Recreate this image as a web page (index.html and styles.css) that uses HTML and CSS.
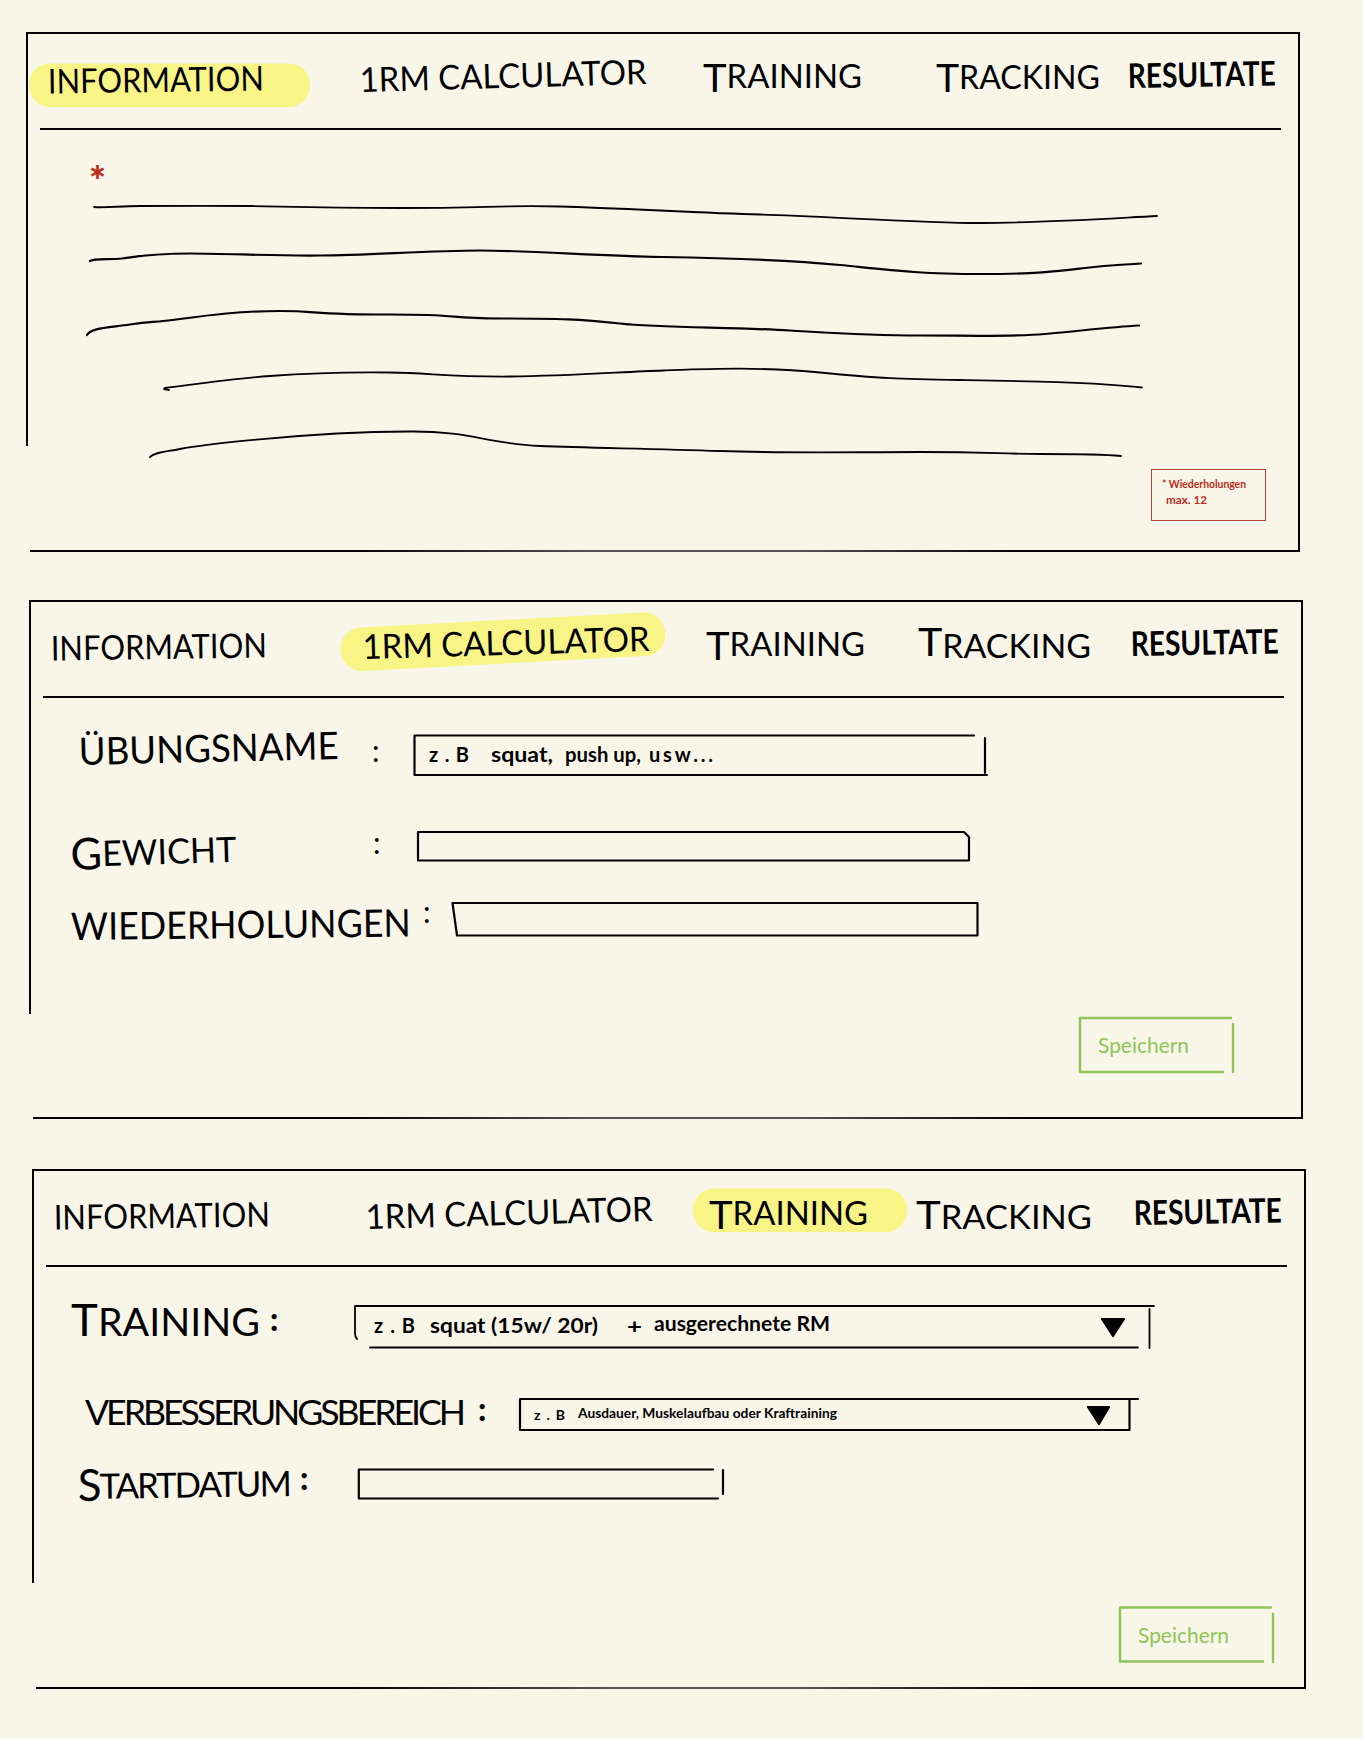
FILE: index.html
```html
<!DOCTYPE html>
<html lang="de">
<head>
<meta charset="utf-8">
<title>1RM Calculator – Wireframes</title>
<link rel="stylesheet" href="styles.css">
</head>
<body>
<main class="board">

  <section class="panel panel--info">
    <nav class="tabs">
      <svg class="ink" width="216" height="60" viewBox="48 52 216 60"><rect class="marker" x="29" y="63.5" width="281" height="43.5" rx="21"/><text class="tab" x="48" y="93.500" textLength="216" lengthAdjust="spacingAndGlyphs" transform="rotate(-.8 48 94)">INFORMATION</text></svg>
      <svg class="ink" width="287" height="60" viewBox="360 52 287 60"><text class="tab" x="360" y="92" textLength="287" lengthAdjust="spacingAndGlyphs" transform="rotate(-1.6 360 92)">1RM CALCULATOR</text></svg>
      <svg class="ink" width="159" height="60" viewBox="703 52 159 60"><text class="tab tab--small" x="703" y="92" textLength="159" lengthAdjust="spacingAndGlyphs"><tspan class="initial">T</tspan><tspan dy="-4">RAINING</tspan></text></svg>
      <svg class="ink" width="164" height="60" viewBox="936 52 164 60"><text class="tab tab--small" x="936" y="92" textLength="164" lengthAdjust="spacingAndGlyphs"><tspan class="initial">T</tspan><tspan dy="-3">RACKING</tspan></text></svg>
      <svg class="ink" width="148" height="60" viewBox="1128 52 148 60"><text class="tab tab--bold" x="1128" y="88" textLength="148" lengthAdjust="spacingAndGlyphs" transform="rotate(-1 1128 88)">RESULTATE</text></svg>
    </nav>
    <svg class="ink scribbles" width="1274" height="330" viewBox="26 130 1274 330">
      <text class="asterisk" x="89" y="196">*</text>
      <path class="thin" d="M94 207C105 208 120 206 140 206S220 205.7 250 206S310 208 400 208S500 205 560 206.5S700 213 760 214.5S920 223 980 223S1100 219 1157 216"/>
      <path d="M90 261C94 258 110 260 122 258.5S150 253.5 190 253.5S270 256 320 255.5S430 250.5 480 250.5S600 256 663 257S790 260 840 265S920 274 980 274S1060 271 1085 268S1120 265 1141 263.5"/>
      <path d="M87 335C91 328 105 328 130 324.5S150 323 180 319S240 311 280 311S310 314.5 390 314.5S440 318.5 500 318.5S580 319 620 323.5S730 327 790 330.5S870 335.5 920 335.5S1010 337 1045 334S1110 327 1139 325.5"/>
      <path class="thin" d="M169 390L164 389L165 388C190 385 230 379 270 376S350 372 390 372.5S450 377 510 376.5S620 372 663 370.5S760 366.5 820 372.5S900 379 960 380S1090 382 1142 387.5"/>
      <path class="thin" d="M150 457C155 452 165 452 180 449S300 432 410 431.5C470 431 490 444 540 446S650 448.5 720 451S850 452 920 452S1000 454 1040 454S1100 454 1121 456"/>
    </svg>
    <aside class="note">
      <svg class="ink" width="90" height="34" viewBox="1161 475 90 34"><text x="1162" y="488.500" textLength="84" lengthAdjust="spacingAndGlyphs">* Wiederholungen</text><text x="1166" y="505" textLength="41" lengthAdjust="spacingAndGlyphs">max. 12</text></svg>
    </aside>
  </section>

  <section class="panel panel--calc">
    <nav class="tabs">
      <svg class="ink" width="216" height="60" viewBox="48 52 216 60"><text class="tab" x="48" y="92.500" textLength="216" lengthAdjust="spacingAndGlyphs" transform="rotate(-.8 48 94)">INFORMATION</text></svg>
      <svg class="ink" width="287" height="60" viewBox="360 52 287 60"><rect class="marker" x="337.500" y="52" width="325" height="43.500" rx="21" transform="rotate(-3 500 74)"/><text class="tab" x="360" y="91" textLength="287" lengthAdjust="spacingAndGlyphs" transform="rotate(-1.6 360 92)">1RM CALCULATOR</text></svg>
      <svg class="ink" width="159" height="60" viewBox="703 52 159 60"><text class="tab tab--small" x="703" y="91.500" textLength="159" lengthAdjust="spacingAndGlyphs"><tspan class="initial">T</tspan><tspan dy="-4">RAINING</tspan></text></svg>
      <svg class="ink" width="173" height="60" viewBox="918 620 173 60"><text class="tab tab--small" x="918" y="656" textLength="173" lengthAdjust="spacingAndGlyphs"><tspan class="initial">T</tspan><tspan dy="2">RACKING</tspan></text></svg>
      <svg class="ink" width="148" height="60" viewBox="1128 52 148 60"><text class="tab tab--bold" x="1128" y="88" textLength="148" lengthAdjust="spacingAndGlyphs" transform="rotate(-1 1128 88)">RESULTATE</text></svg>
    </nav>
    <div class="row row--name">
      <svg class="ink" width="294" height="55" viewBox="79 725 294 55"><text class="label" x="79" y="765" textLength="260" lengthAdjust="spacingAndGlyphs" transform="rotate(-1.3 79 766)">ÜBUNGSNAME</text></svg>
      <svg class="ink" width="41" height="55" viewBox="373 725 41 55"><text class="colon" x="372" y="761.500">:</text></svg>
      <svg class="ink" width="576" height="55" viewBox="414 725 576 55"><path d="M974 735.5H414.5V775H987M985 738V773"/><text class="value" x="429" y="762" textLength="40" lengthAdjust="spacing">z.B</text><text class="value" x="491" y="762" textLength="62" lengthAdjust="spacingAndGlyphs">squat,</text><text class="value" x="565" y="762" textLength="76" lengthAdjust="spacingAndGlyphs">push up,</text><text class="value" x="649" y="762" textLength="64" lengthAdjust="spacing">usw...</text></svg>
    </div>
    <div class="row row--weight">
      <svg class="ink" width="302" height="50" viewBox="71 825 302 50"><text class="label label--small" x="71" y="870" textLength="166" lengthAdjust="spacingAndGlyphs" transform="rotate(-1.8 71 870)"><tspan class="initial">G</tspan><tspan dy="-3">EWICHT</tspan></text></svg>
      <svg class="ink" width="45" height="50" viewBox="373 825 45 50"><text class="colon" x="373" y="854">:</text></svg>
      <svg class="ink" width="556" height="50" viewBox="418 825 556 50"><path d="M418 832H964L969 837V860.5H418Z"/></svg>
    </div>
    <div class="row row--reps">
      <svg class="ink" width="349" height="50" viewBox="71 895 349 50"><text class="label" x="71" y="940" textLength="340" lengthAdjust="spacingAndGlyphs" transform="rotate(-.6 71 940)">WIEDERHOLUNGEN</text></svg>
      <svg class="ink" width="32" height="50" viewBox="420 895 32 50"><text class="colon" x="423" y="923">:</text></svg>
      <svg class="ink" width="530" height="50" viewBox="452 895 530 50"><path d="M452.5 903H977.5V935.5H457Z"/></svg>
    </div>
    <div class="save">
      <svg class="ink" width="160" height="70" viewBox="1075 1010 160 70"><path d="M1231 1018H1080V1072H1223M1233 1024V1072"/><text x="1098" y="1053" textLength="91" lengthAdjust="spacingAndGlyphs">Speichern</text></svg>
    </div>
  </section>

  <section class="panel panel--training">
    <nav class="tabs">
      <svg class="ink" width="216" height="60" viewBox="48 52 216 60"><text class="tab" x="48" y="92.500" textLength="216" lengthAdjust="spacingAndGlyphs" transform="rotate(-.8 48 94)">INFORMATION</text></svg>
      <svg class="ink" width="287" height="60" viewBox="360 52 287 60"><text class="tab" x="360" y="92" textLength="287" lengthAdjust="spacingAndGlyphs" transform="rotate(-1.6 360 92)">1RM CALCULATOR</text></svg>
      <svg class="ink" width="159" height="60" viewBox="703 52 159 60"><rect class="marker" x="687" y="51.5" width="214" height="43.5" rx="21"/><text class="tab tab--small" x="703" y="92" textLength="159" lengthAdjust="spacingAndGlyphs"><tspan class="initial">T</tspan><tspan dy="-4">RAINING</tspan></text></svg>
      <svg class="ink" width="176" height="60" viewBox="916 1189 176 60"><text class="tab tab--small" x="916" y="1229" textLength="176" lengthAdjust="spacingAndGlyphs"><tspan class="initial">T</tspan><tspan>RACKING</tspan></text></svg>
      <svg class="ink" width="148" height="60" viewBox="1128 52 148 60"><text class="tab tab--bold" x="1128" y="88" textLength="148" lengthAdjust="spacingAndGlyphs" transform="rotate(-1 1128 88)">RESULTATE</text></svg>
    </nav>
    <div class="row row--training">
      <svg class="ink" width="197" height="60" viewBox="71 1295 197 60"><text class="label" x="71" y="1336" textLength="189" lengthAdjust="spacingAndGlyphs"><tspan class="initial">T</tspan>RAINING</text></svg>
      <svg class="ink" width="86" height="60" viewBox="268 1295 86 60"><text class="colon colon--bold" x="270" y="1331">:</text></svg>
      <svg class="ink" width="806" height="60" viewBox="354 1295 806 60"><path class="thin" d="M1154 1306H355V1333Q355 1337 357 1339M370 1347.5H1138M1149.5 1309V1348"/><path class="arrow" d="M1102 1319H1124L1113 1336Z"/><text class="value" x="374" y="1333" textLength="41" lengthAdjust="spacing">z.B</text><text class="value" x="430" y="1333" textLength="168" lengthAdjust="spacingAndGlyphs">squat (15w/ 20r)</text><text class="value" x="627" y="1334" textLength="15" lengthAdjust="spacingAndGlyphs">+</text><text class="value" x="654" y="1331" textLength="176" lengthAdjust="spacingAndGlyphs">ausgerechnete RM</text></svg>
    </div>
    <div class="row row--goal">
      <svg class="ink" width="390" height="45" viewBox="85 1390 390 45"><text class="label label--small label--tight" x="85" y="1425" textLength="378" lengthAdjust="spacingAndGlyphs">VERBESSERUNGSBEREICH</text></svg>
      <svg class="ink" width="45" height="45" viewBox="475 1390 45 45"><text class="colon colon--bold" x="478" y="1421">:</text></svg>
      <svg class="ink" width="622" height="45" viewBox="520 1390 622 45"><path d="M1138 1399H520V1430H1129.500V1400"/><path class="arrow" d="M1088 1407H1109L1099 1424Z"/><text class="value value--small" x="534" y="1420" textLength="31" lengthAdjust="spacing">z.B</text><text class="value value--small" x="578" y="1418" textLength="259" lengthAdjust="spacingAndGlyphs">Ausdauer, Muskelaufbau oder Kraftraining</text></svg>
    </div>
    <div class="row row--start">
      <svg class="ink" width="220" height="45" viewBox="78 1462 220 45"><text class="label label--small label--close" x="78" y="1501" textLength="212" lengthAdjust="spacingAndGlyphs" transform="rotate(-.8 78 1501)"><tspan class="initial">S</tspan><tspan dy="-2">TARTDATUM</tspan></text></svg>
      <svg class="ink" width="60" height="45" viewBox="298 1462 60 45"><text class="colon colon--bold" x="300" y="1490">:</text></svg>
      <svg class="ink" width="370" height="45" viewBox="358 1462 370 45"><path d="M713 1469.500H358.800V1498.500H718M723 1470V1494"/></svg>
    </div>
    <div class="save">
      <svg class="ink" width="160" height="70" viewBox="1075 1010 160 70"><path d="M1231 1017.500H1080V1071.500H1223M1233 1024V1072"/><text x="1098" y="1053" textLength="91" lengthAdjust="spacingAndGlyphs">Speichern</text></svg>
    </div>
  </section>

</main>
</body>
</html>
```

FILE: styles.css
```css
:root {
  --paper: #f8f6e9;
  --ink: #020203;
  --marker: #f8f586;
  --red: #bd2a20;
  --green: #8fc556;
}

* { box-sizing: border-box; }

body {
  margin: 0;
  min-height: 1739px;
  background: var(--paper);
  color: var(--ink);
  font-family: Lato, "Open Sans", sans-serif;
}

.board {
  display: flex;
  flex-direction: column;
  padding: 32px 0 50px 26px;
}

/* Frame with an open lower-left corner */
.panel {
  width: 1274px;
  height: 520px;
  background:
    linear-gradient(var(--ink), var(--ink)) 0 0 / 100% 2px no-repeat,
    linear-gradient(var(--ink), var(--ink)) 100% 0 / 2px 100% no-repeat,
    linear-gradient(var(--ink), var(--ink)) 0 0 / 2px 414px no-repeat,
    linear-gradient(90deg, var(--ink) 25%, #555 45%, #555 60%, var(--ink) 78%) 100% 100% / calc(100% - 4px) 2px no-repeat;
}

.panel--calc { margin: 48px 0 0 3px; height: 519px; }
.panel--training { margin: 50px 0 0 6px; }

.tabs {
  display: grid;
  grid-template-columns: 312px 343px 233px 192px 148px;
  height: 98px;
  margin: 0 19px 0 14px;
  padding: 20px 0 0 8px;
  border-bottom: 2.5px solid var(--ink);
}

.panel--calc .tabs { grid-template-columns: 312px 343px 212px 213px 148px; }
.panel--training .tabs { grid-template-columns: 312px 343px 207px 218px 148px; }

.ink {
  display: block;
  flex: none;
  overflow: visible;
  fill: none;
  stroke: none;
}

.ink path {
  stroke: var(--ink);
  stroke-width: 2.2;
  stroke-linecap: round;
  stroke-linejoin: round;
}

.ink .thin { stroke-width: 1.8; }
.ink .arrow { fill: var(--ink); }
.ink text { fill: var(--ink); }
.ink .marker { fill: var(--marker); }

.tab { font-size: 34px; }
.tab--small { font-size: 32px; }
.tab--small .initial { font-size: 39px; }
.tab--bold { font-size: 34px; font-weight: 700; }

.label { font-size: 38px; }
.label--small { font-size: 35px; }
.label--tight { letter-spacing: -3px; }
.label--close { letter-spacing: -2px; }
.label .initial { font-size: 44px; }

.colon { font-size: 30px; }
.colon--bold { font-size: 32px; font-weight: 900; }

.value { font-size: 20px; font-weight: 700; }
.value--small { font-size: 14px; }

.ink .asterisk { fill: var(--red); font-size: 40px; font-weight: 900; }

.note {
  width: 115px;
  height: 52px;
  margin: 9px 0 0 1125px;
  padding: 4px 9px;
  border: 1.5px solid #b9423b;
}

.note .ink text { fill: var(--red); font-size: 12px; font-weight: 700; }

.row { display: flex; }
.row--name { margin: 27px 0 0 50px; }
.row--weight { margin: 45px 0 0 42px; }
.row--reps { margin: 20px 0 0 42px; }
.row--training { margin: 28px 0 0 39px; }
.row--goal { margin: 35px 0 0 53px; }
.row--start { margin: 27px 0 0 46px; }

.save { width: 160px; }
.panel--calc .save { margin: 65px 0 0 1046px; }
.panel--training .save { margin: 93px 0 0 1083px; }

.save .ink path { stroke: var(--green); stroke-width: 2.4; }
.save .ink text { fill: var(--green); font-size: 22px; }
```
